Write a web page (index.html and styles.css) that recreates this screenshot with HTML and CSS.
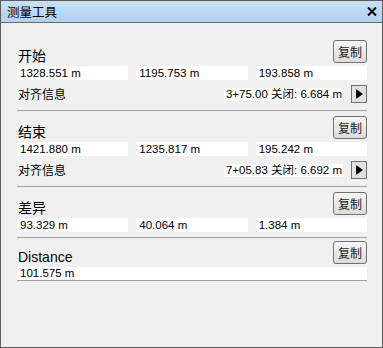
FILE: index.html
```html
<!DOCTYPE html>
<html lang="zh">
<head>
<meta charset="utf-8">
<title>测量工具</title>
<link rel="stylesheet" href="styles.css">
</head>
<body>
<div class="window">
  <div class="titlebar">
    <span class="title">测量工具</span>
    <svg class="close" width="10" height="9" viewBox="0 0 10 9"><path d="M1 0.5 L9 8.5 M9 0.5 L1 8.5" stroke="#000" stroke-width="2"/></svg>
  </div>
  <div class="content">
    <section class="sec sec-first">
      <div class="head"><span class="label">开始</span><button class="copy">复制</button></div>
      <div class="fields">
        <div class="field">1328.551 m</div>
        <div class="field">1195.753 m</div>
        <div class="field">193.858 m</div>
      </div>
      <div class="align">
        <span class="alabel">对齐信息</span>
        <div class="aright">
          <span class="abox">3+75.00 关闭: 6.684 m</span>
          <button class="arrow"><svg width="7" height="10" viewBox="0 0 7 10"><path d="M0 0 L7 5 L0 10 Z" fill="#000"/></svg></button>
        </div>
      </div>
    </section>
    <div class="sep"></div>
    <section class="sec">
      <div class="head"><span class="label">结束</span><button class="copy">复制</button></div>
      <div class="fields">
        <div class="field">1421.880 m</div>
        <div class="field">1235.817 m</div>
        <div class="field">195.242 m</div>
      </div>
      <div class="align">
        <span class="alabel">对齐信息</span>
        <div class="aright">
          <span class="abox">7+05.83 关闭: 6.692 m</span>
          <button class="arrow"><svg width="7" height="10" viewBox="0 0 7 10"><path d="M0 0 L7 5 L0 10 Z" fill="#000"/></svg></button>
        </div>
      </div>
    </section>
    <div class="sep"></div>
    <section class="sec">
      <div class="head"><span class="label">差异</span><button class="copy">复制</button></div>
      <div class="fields">
        <div class="field">93.329 m</div>
        <div class="field">40.064 m</div>
        <div class="field">1.384 m</div>
      </div>
    </section>
    <div class="sep sep-short"></div>
    <section class="sec sec-last">
      <div class="head"><span class="label">Distance</span><button class="copy">复制</button></div>
      <div class="field field-wide">101.575 m</div>
    </section>
  </div>
</div>
</body>
</html>
```

FILE: styles.css
```css
* { box-sizing: border-box; }
html, body { margin: 0; padding: 0; }
body {
  font-family: "Liberation Sans", "Noto Sans CJK SC", sans-serif;
  color: #000;
  background: #f0f0f0;
}
.window {
  width: 383px;
  height: 348px;
  border: 1px solid #5c5c5c;
  background: #f0f0f0;
  display: flex;
  flex-direction: column;
}
.titlebar {
  height: 22px;
  border-bottom: 1px solid #6a6a6a;
  background: linear-gradient(#c8e0f6, #b0d0ee);
  display: flex;
  align-items: center;
  justify-content: space-between;
  padding: 0 5px 0 6px;
}
.title {
  font-size: 12.5px;
  line-height: 21px;
  font-family: "Noto Sans CJK SC", sans-serif;
}
.close { display: block; margin-top: -1px; }
.content {
  padding: 0 15px 0 16px;
  display: flex;
  flex-direction: column;
}
.sec { padding-top: 5px; display: flex; flex-direction: column; }
.sec-first { padding-top: 17px; }
.sec-last { padding-top: 3px; }
.head {
  height: 23px;
  display: flex;
  justify-content: space-between;
  align-items: flex-end;
}
.label {
  font-size: 14px;
  line-height: 14px;
  padding-left: 1px;
}
.copy {
  width: 34px;
  height: 23px;
  padding: 0;
  border: 1px solid #707070;
  border-radius: 3px;
  background: linear-gradient(#f6f6f6, #dcdcdc);
  font-family: "Noto Sans CJK SC", sans-serif;
  font-size: 12px;
  line-height: 20px;
  color: #1a1a1a;
}
.fields {
  margin-top: 3px;
  display: grid;
  grid-template-columns: 1fr 1fr 1fr;
  gap: 8px;
}
.field {
  height: 14px;
  line-height: 14px;
  font-size: 11.5px;
  padding-left: 3px;
  background: #fff;
  white-space: nowrap;
}
.field-wide {
  margin-top: 3px;
  border-bottom: 1px solid #a0a0a0;
  line-height: 13px;
}
.align {
  margin-top: 5px;
  height: 18px;
  display: flex;
  justify-content: space-between;
  align-items: center;
}
.alabel {
  font-size: 12px;
  line-height: 14px;
  font-family: "Noto Sans CJK SC", sans-serif;
  padding-left: 1px;
}
.aright { display: flex; align-items: center; gap: 8px; }
.abox {
  height: 13px;
  line-height: 13px;
  font-size: 11.5px;
  background: #fff;
  padding: 0 1px 0 2px;
  white-space: nowrap;
}
.arrow {
  width: 16px;
  height: 18px;
  padding: 0;
  border: 1px solid #707070;
  background: #e1e1e1;
  display: flex;
  align-items: center;
  justify-content: center;
}
.arrow svg { display: block; margin-left: 1px; }
.sep {
  margin-top: 7px;
  height: 1px;
  background: #a0a0a0;
}
.sep-short { margin-top: 5px; }
```
